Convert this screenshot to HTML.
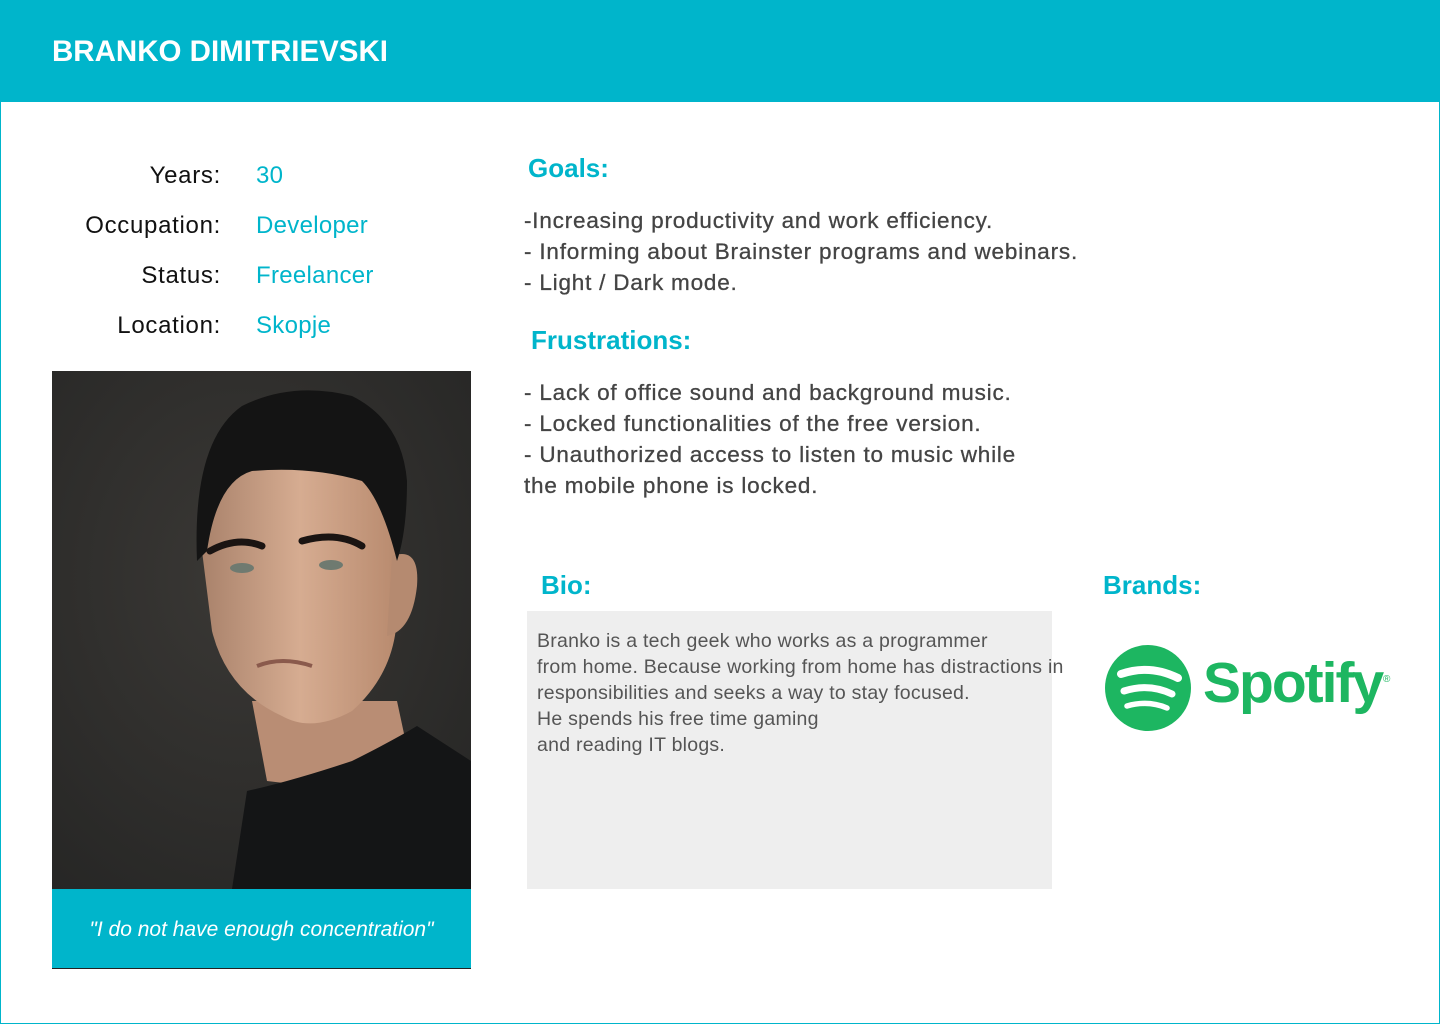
<!DOCTYPE html>
<html><head><meta charset="utf-8"><style>
*{margin:0;padding:0;box-sizing:border-box}
body{width:1440px;height:1024px;position:relative;background:#fff;font-family:"Liberation Sans",Roboto,sans-serif;overflow:hidden}
.frame{position:absolute;inset:0;border:1px solid #00b5cb;border-top:none}
.hdr{position:absolute;left:0;top:0;width:1440px;height:102px;background:#00b5cb}
.hdr h1{position:absolute;left:52px;top:35px;color:#fff;font-size:29.5px;font-weight:bold}
.lab{position:absolute;right:1219px;font-size:24px;color:#111;text-align:right;white-space:nowrap;letter-spacing:0.7px}
.val{position:absolute;left:256px;font-size:24px;color:#00b5cb;white-space:nowrap;letter-spacing:0.3px}
.h{position:absolute;font-size:26px;font-weight:bold;color:#00b5cb}
.t{position:absolute;left:524px;font-size:22.5px;color:#444;line-height:31px;white-space:nowrap;letter-spacing:0.8px;-webkit-text-stroke:0.3px #444}
.bio{position:absolute;left:527px;top:611px;width:525px;height:278px;background:#eee}
.bio p{position:absolute;left:10px;top:17px;font-size:19.5px;color:#555;line-height:26px;white-space:nowrap;letter-spacing:0.25px}
.photo{position:absolute;left:52px;top:371px;width:419px;height:518px}
.quote{position:absolute;left:52px;top:889px;width:419px;height:80px;background:#00b5cb;border-bottom:1px solid #222;color:#fff;font-style:italic;font-size:21px;text-align:center;line-height:82px}
</style></head><body>
<div class="hdr"><h1>BRANKO DIMITRIEVSKI</h1></div>
<div class="lab" style="top:162px">Years:</div><div class="val" style="top:162px">30</div>
<div class="lab" style="top:212px">Occupation:</div><div class="val" style="top:212px">Developer</div>
<div class="lab" style="top:262px">Status:</div><div class="val" style="top:262px">Freelancer</div>
<div class="lab" style="top:312px">Location:</div><div class="val" style="top:312px">Skopje</div>
<svg class="photo" viewBox="0 0 419 518">
<defs><radialGradient id="bg" cx="0.45" cy="0.4" r="0.8"><stop offset="0" stop-color="#3a3835"/><stop offset="1" stop-color="#252524"/></radialGradient>
<linearGradient id="sk" x1="0" y1="0" x2="1" y2="0"><stop offset="0" stop-color="#a9826b"/><stop offset="0.5" stop-color="#d6ac91"/><stop offset="1" stop-color="#b88a6e"/></linearGradient></defs>
<rect width="419" height="518" fill="url(#bg)"/>
<path d="M200 330 L345 330 L360 400 L300 420 L215 410 Z" fill="#b98d74"/>
<path d="M150 180 Q148 110 200 95 L320 100 Q352 150 345 240 Q345 300 300 340 Q260 362 230 345 Q175 320 160 260 Z" fill="url(#sk)"/>
<path d="M340 185 Q368 175 365 215 Q360 260 335 265 Z" fill="#b58a70"/>
<path d="M145 190 Q140 70 190 35 Q240 10 300 25 Q350 50 355 110 Q355 160 345 190 Q330 130 310 110 Q260 95 200 100 Q165 110 155 180 Z" fill="#141414"/>
<path d="M158 180 Q185 165 210 175 M250 170 Q285 160 310 175" stroke="#1a1412" stroke-width="7" fill="none" stroke-linecap="round"/>
<ellipse cx="190" cy="197" rx="12" ry="5" fill="#6f7a70"/><ellipse cx="279" cy="194" rx="12" ry="5" fill="#6f7a70"/>
<path d="M205 295 Q230 285 260 295" stroke="#8a5a4c" stroke-width="4" fill="none"/>
<path d="M180 518 L195 420 Q240 410 300 390 Q340 370 365 355 L419 390 L419 518 Z" fill="#141516"/>
</svg>
<div class="quote">"I do not have enough concentration"</div>
<div class="h" style="left:528px;top:153px">Goals:</div>
<div class="t" style="top:205px">-Increasing productivity and work efficiency.<br>- Informing about Brainster programs and webinars.<br>- Light / Dark mode.</div>
<div class="h" style="left:531px;top:325px">Frustrations:</div>
<div class="t" style="top:377px">- Lack of office sound and background music.<br>- Locked functionalities of the free version.<br>- Unauthorized access to listen to music while<br>the mobile phone is locked.</div>
<div class="h" style="left:541px;top:570px">Bio:</div>
<div class="bio"><p>Branko is a tech geek who works as a programmer<br>from home. Because working from home has distractions in<br>responsibilities and seeks a way to stay focused.<br>He spends his free time gaming<br>and reading IT blogs.</p></div>
<div class="h" style="left:1103px;top:570px">Brands:</div>
<svg style="position:absolute;left:1104px;top:644px" width="88" height="88" viewBox="0 0 88 88">
<circle cx="44" cy="44" r="43" fill="#1db661"/>
<path d="M17 30 Q46 20 74 34" stroke="#fff" stroke-width="8" fill="none" stroke-linecap="round"/>
<path d="M20 47 Q45 39 68 50" stroke="#fff" stroke-width="7" fill="none" stroke-linecap="round"/>
<path d="M23 62 Q44 56 63 64" stroke="#fff" stroke-width="5.5" fill="none" stroke-linecap="round"/>
</svg>
<div style="position:absolute;left:1203px;top:650px;font-size:57px;font-weight:bold;color:#1db661;letter-spacing:-2px">Spotify</div>
<div style="position:absolute;left:1383px;top:674px;font-size:10px;color:#1db661">®</div>
<div class="frame"></div>
</body></html>
